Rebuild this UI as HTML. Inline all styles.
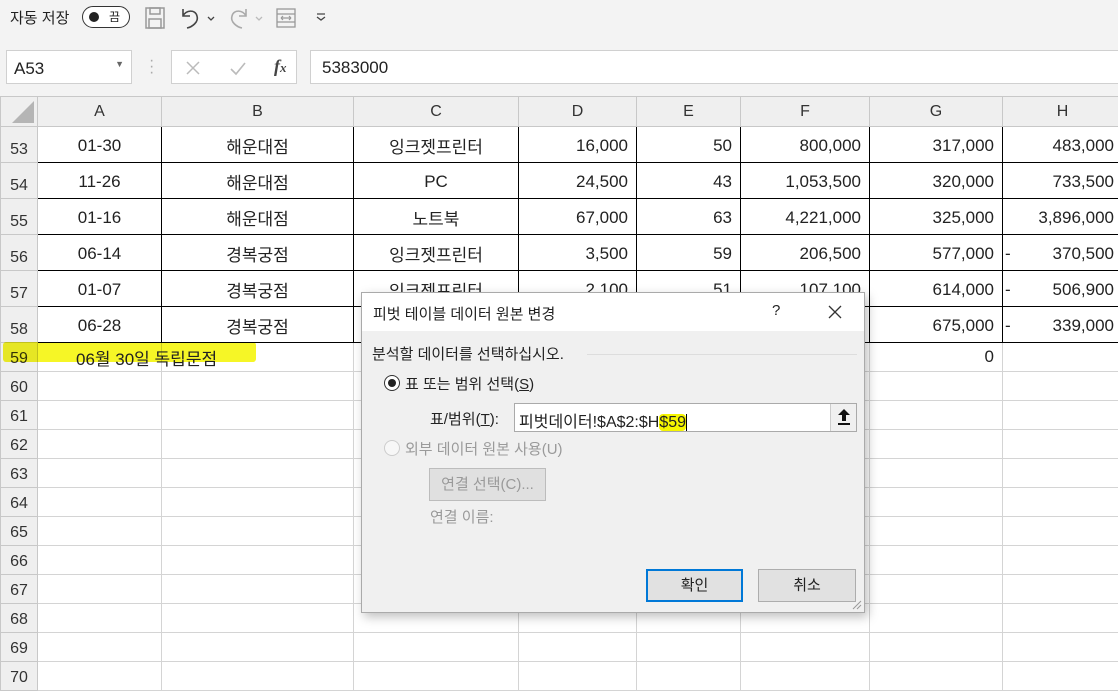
<!DOCTYPE html>
<html><head><meta charset="utf-8"><style>
*{box-sizing:border-box;margin:0;padding:0}
body{width:1118px;height:673px;overflow:hidden;background:#fff;font-family:"Liberation Sans","Noto Sans CJK KR",sans-serif;position:relative;color:#222}
.top{position:absolute;left:0;top:0;width:1118px;height:40px;background:#f3f3f3;box-shadow:0 2px 4px rgba(0,0,0,.12)}
.fbar{position:absolute;left:0;top:40px;width:1118px;height:56px;background:#f3f3f3}
table{position:absolute;left:0;top:96px;width:1122px;border-collapse:collapse;table-layout:fixed;font-size:17px}
td{border:1px solid #d4d4d4;height:29px;padding:0 8px;white-space:nowrap;overflow:hidden;color:#222}
tr.h td{background:#efefef;height:30px;text-align:center;color:#333;font-size:16px;border-color:#c8c8c8}
td.rn{background:#efefef;text-align:center;color:#333;font-size:16px;padding:0;border-color:#c8c8c8;vertical-align:bottom;padding-bottom:3px}
tr.d td{height:36px;border-color:#000;padding-top:2px}
tr.d td.rn{border-color:#c8c8c8}
.c{text-align:center}.r{text-align:right}
.dlg{position:absolute;left:361px;top:292px;width:504px;height:321px;background:#f0f0f0;border:1px solid #aaa;box-shadow:3px 4px 10px rgba(0,0,0,.25);font-size:15px;color:#222}
.dlg .tt{height:38px;background:#fff;padding:10px 0 0 11px;font-size:15px}
.btn{position:absolute;height:33px;border:1px solid #adadad;background:#e1e1e1;text-align:center;line-height:31px;font-size:15px}
</style></head><body>
<div class="top">
 <span style="position:absolute;left:10px;top:7px;font-size:15px">자동 저장</span>
 <div style="position:absolute;left:82px;top:6px;width:48px;height:22px;border:1.5px solid #333;border-radius:11px;background:#fff"><div style="position:absolute;left:6px;top:5px;width:10px;height:10px;border-radius:50%;background:#222"></div><span style="position:absolute;left:26px;top:1px;font-size:12px">끔</span></div>
 <svg style="position:absolute;left:145px;top:7px" width="20" height="22" viewBox="0 0 20 22"><rect x="1" y="1" width="18" height="20" fill="none" stroke="#999" stroke-width="1.5"/><rect x="5" y="1" width="10" height="6" fill="none" stroke="#999" stroke-width="1.5"/><rect x="4" y="12" width="12" height="9" fill="none" stroke="#999" stroke-width="1.5"/></svg>
 <svg style="position:absolute;left:178px;top:6px" width="40" height="24" viewBox="0 0 40 24"><path d="M5 3 V10 H12 M5 10 C8 4 17 3 19 10 C21 16 14 21 9 22" fill="none" stroke="#444" stroke-width="1.6"/><path d="M30 11 l3 3 l3 -3" fill="none" stroke="#444" stroke-width="1.3"/></svg>
 <svg style="position:absolute;left:226px;top:6px" width="40" height="24" viewBox="0 0 40 24"><path d="M20 3 V10 H13 M20 10 C17 4 8 3 6 10 C4 16 11 21 16 22" fill="none" stroke="#aaa" stroke-width="1.6"/><path d="M30 11 l3 3 l3 -3" fill="none" stroke="#bbb" stroke-width="1.3"/></svg>
 <svg style="position:absolute;left:276px;top:8px" width="20" height="20" viewBox="0 0 20 20"><rect x="1" y="1" width="18" height="18" fill="none" stroke="#999" stroke-width="1.3"/><path d="M1 6 H19 M1 14 H19 M5 10 H15 M5 10 l2 -2 M5 10 l2 2 M15 10 l-2 -2 M15 10 l-2 2" fill="none" stroke="#999" stroke-width="1.2"/></svg>
 <svg style="position:absolute;left:315px;top:12px" width="12" height="10" viewBox="0 0 12 10"><path d="M2 2 H10 M2 5 l4 3 l4 -3" fill="none" stroke="#444" stroke-width="1.3"/></svg>
</div>
<div class="fbar">
 <div style="position:absolute;left:6px;top:10px;width:126px;height:34px;background:#fff;border:1px solid #d0d0d0;font-size:17px;padding:8px 0 0 7px">A53<span style="position:absolute;right:7px;top:8px;font-size:9px;color:#666">▼</span></div>
 <div style="position:absolute;left:149px;top:18px;color:#aaa;font-size:16px;line-height:6px">·<br>·<br>·</div>
 <div style="position:absolute;left:171px;top:10px;width:126px;height:34px;background:#fff;border:1px solid #d0d0d0">
  <svg style="position:absolute;left:13px;top:9px" width="16" height="16"><path d="M2 2 L14 14 M14 2 L2 14" stroke="#bbb" stroke-width="1.5"/></svg>
  <svg style="position:absolute;left:57px;top:9px" width="18" height="16"><path d="M2 9 L7 14 L16 3" fill="none" stroke="#bbb" stroke-width="1.6"/></svg>
  <span style="position:absolute;left:102px;top:5px;font-family:'Liberation Serif',serif;font-style:italic;font-weight:bold;font-size:18px;color:#444">f<span style="font-size:13px">x</span></span>
 </div>
 <div style="position:absolute;left:310px;top:10px;width:810px;height:34px;background:#fff;border:1px solid #d0d0d0;font-size:17px;padding:7px 0 0 11px">5383000</div>
</div>
<table>
<colgroup><col style="width:37px"><col style="width:124px"><col style="width:192px"><col style="width:165px"><col style="width:118px"><col style="width:104px"><col style="width:129px"><col style="width:133px"><col style="width:120px"></colgroup>
<tr class="h"><td style="position:relative"><svg style="position:absolute;right:3px;bottom:3px" width="22" height="22"><path d="M22 0 V22 H0 Z" fill="#b5b5b5"/></svg></td><td>A</td><td>B</td><td>C</td><td>D</td><td>E</td><td>F</td><td>G</td><td>H</td></tr>
<tr class="d"><td class="rn">53</td><td class="c">01-30</td><td class="c">해운대점</td><td class="c">잉크젯프린터</td><td class="r">16,000</td><td class="r">50</td><td class="r">800,000</td><td class="r">317,000</td><td class="r">483,000</td></tr>
<tr class="d"><td class="rn">54</td><td class="c">11-26</td><td class="c">해운대점</td><td class="c">PC</td><td class="r">24,500</td><td class="r">43</td><td class="r">1,053,500</td><td class="r">320,000</td><td class="r">733,500</td></tr>
<tr class="d"><td class="rn">55</td><td class="c">01-16</td><td class="c">해운대점</td><td class="c">노트북</td><td class="r">67,000</td><td class="r">63</td><td class="r">4,221,000</td><td class="r">325,000</td><td class="r">3,896,000</td></tr>
<tr class="d"><td class="rn">56</td><td class="c">06-14</td><td class="c">경복궁점</td><td class="c">잉크젯프린터</td><td class="r">3,500</td><td class="r">59</td><td class="r">206,500</td><td class="r">577,000</td><td class="r"><span style="float:left;margin-left:-6px">-</span>370,500</td></tr>
<tr class="d"><td class="rn">57</td><td class="c">01-07</td><td class="c">경복궁점</td><td class="c">잉크젯프린터</td><td class="r">2,100</td><td class="r">51</td><td class="r">107,100</td><td class="r">614,000</td><td class="r"><span style="float:left;margin-left:-6px">-</span>506,900</td></tr>
<tr class="d"><td class="rn">58</td><td class="c">06-28</td><td class="c">경복궁점</td><td class="c">잉크젯프린터</td><td class="r">3,200</td><td class="r">55</td><td class="r">176,000</td><td class="r">675,000</td><td class="r"><span style="float:left;margin-left:-6px">-</span>339,000</td></tr>
<tr><td class="rn">59</td><td style="overflow:visible;padding-left:38px;position:relative;z-index:2">06월 30일 독립문점</td><td style="border-left-color:transparent"></td><td></td><td></td><td></td><td></td><td class="r">0</td><td></td></tr>
<tr><td class="rn">60</td><td></td><td></td><td></td><td></td><td></td><td></td><td></td><td></td></tr>
<tr><td class="rn">61</td><td></td><td></td><td></td><td></td><td></td><td></td><td></td><td></td></tr>
<tr><td class="rn">62</td><td></td><td></td><td></td><td></td><td></td><td></td><td></td><td></td></tr>
<tr><td class="rn">63</td><td></td><td></td><td></td><td></td><td></td><td></td><td></td><td></td></tr>
<tr><td class="rn">64</td><td></td><td></td><td></td><td></td><td></td><td></td><td></td><td></td></tr>
<tr><td class="rn">65</td><td></td><td></td><td></td><td></td><td></td><td></td><td></td><td></td></tr>
<tr><td class="rn">66</td><td></td><td></td><td></td><td></td><td></td><td></td><td></td><td></td></tr>
<tr><td class="rn">67</td><td></td><td></td><td></td><td></td><td></td><td></td><td></td><td></td></tr>
<tr><td class="rn">68</td><td></td><td></td><td></td><td></td><td></td><td></td><td></td><td></td></tr>
<tr><td class="rn">69</td><td></td><td></td><td></td><td></td><td></td><td></td><td></td><td></td></tr>
<tr><td class="rn">70</td><td></td><td></td><td></td><td></td><td></td><td></td><td></td><td></td></tr>
</table>
<div style="position:absolute;left:3px;top:342px;width:253px;height:20px;background:#f5f500;opacity:.85;border-radius:3px;z-index:1;mix-blend-mode:multiply"></div>
<div class="dlg">
 <div class="tt">피벗 테이블 데이터 원본 변경<span style="position:absolute;left:410px;top:9px">?</span><svg style="position:absolute;left:466px;top:12px" width="14" height="14"><path d="M1 1 L13 13 M13 1 L1 13" stroke="#333" stroke-width="1.3"/></svg></div>
 <div style="position:absolute;left:10px;top:50px">분석할 데이터를 선택하십시오.</div>
 <div style="position:absolute;left:225px;top:61px;width:270px;border-top:1px solid #ddd"></div>
 <div style="position:absolute;left:22px;top:82px;width:16px;height:16px;border:1px solid #333;border-radius:50%;background:#fff"><div style="position:absolute;left:3px;top:3px;width:8px;height:8px;border-radius:50%;background:#222"></div></div>
 <div style="position:absolute;left:43px;top:80px">표 또는 범위 선택(<u>S</u>)</div>
 <div style="position:absolute;left:68px;top:115px">표/범위(<u>T</u>):</div>
 <div style="position:absolute;left:152px;top:110px;width:343px;height:29px;background:#fff;border:1px solid #aaa;padding:4px 0 0 4px;font-size:16px">피벗데이터!$A$2:$H<span style="background:#f5f500;border-radius:4px">$59</span><span style="border-left:1px solid #000;margin-left:0"></span>
  <div style="position:absolute;right:0;top:0;width:26px;height:27px;background:#f0f0f0;border-left:1px solid #ccc"><svg style="position:absolute;left:7px;top:5px" width="12" height="16"><path d="M6 0 L12 6 H8 V12 H4 V6 H0 Z" fill="#111"/><rect x="0" y="14" width="12" height="2" fill="#111"/></svg></div></div>
 <div style="position:absolute;left:22px;top:147px;width:16px;height:16px;border:1px solid #ccc;border-radius:50%;background:#f7f7f7"></div>
 <div style="position:absolute;left:43px;top:145px;color:#9a9a9a">외부 데이터 원본 사용(U)</div>
 <div class="btn" style="left:67px;top:175px;width:117px;color:#9a9a9a;background:#e0e0e0;border-color:#bcbcbc">연결 선택(C)...</div>
 <div style="position:absolute;left:68px;top:213px;color:#9a9a9a">연결 이름:</div>
 <div class="btn" style="left:284px;top:276px;width:97px;border:2px solid #0078d7;line-height:29px">확인</div>
 <div class="btn" style="left:396px;top:276px;width:98px">취소</div>
 <svg style="position:absolute;right:2px;bottom:2px" width="10" height="10"><path d="M9 1 L1 9 M9 5 L5 9" stroke="#999"/></svg>
</div>
</body></html>
